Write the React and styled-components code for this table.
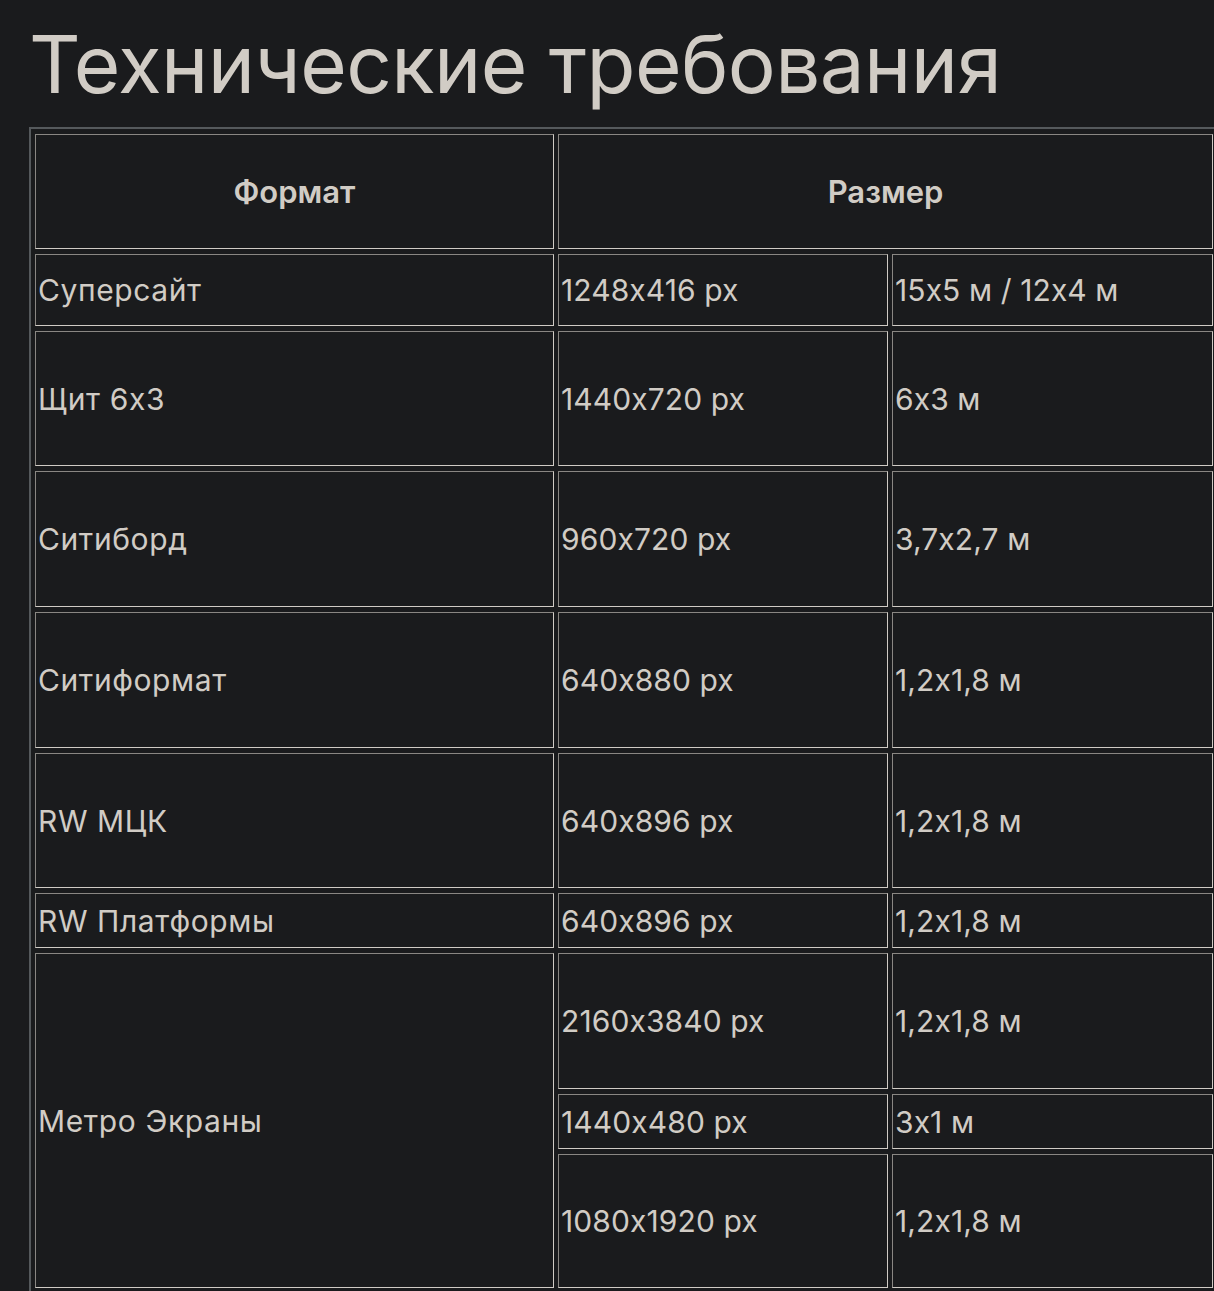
import styled, { createGlobalStyle } from 'styled-components'

const GlobalStyle = createGlobalStyle`
    html, body {
        margin: 0;
        padding: 0;
        background: #1a1b1d;
        overflow: hidden;
    }
`

const rows = [
    { format: 'Суперсайт', sizes: [['1248x416 px', '15x5 м / 12x4 м', 72]] },
    { format: 'Щит 6x3', sizes: [['1440x720 px', '6x3 м', 135]] },
    { format: 'Ситиборд', sizes: [['960x720 px', '3,7x2,7 м', 136]] },
    { format: 'Ситиформат', sizes: [['640x880 px', '1,2x1,8 м', 136]] },
    { format: 'RW МЦК', sizes: [['640x896 px', '1,2x1,8 м', 135]] },
    { format: 'RW Платформы', sizes: [['640x896 px', '1,2x1,8 м', 55]] },
    {
        format: 'Метро Экраны',
        sizes: [
            ['2160x3840 px', '1,2x1,8 м', 136],
            ['1440x480 px', '3x1 м', 55],
            ['1080x1920 px', '1,2x1,8 м', 134],
        ],
    },
]

const App = () => {
    return (
        <>
            <GlobalStyle />
            <Page>
                <Title>Технические требования</Title>
                <Table>
                    <colgroup>
                        <col style={{ width: 519 }} />
                        <col style={{ width: 330 }} />
                        <col style={{ width: 321 }} />
                    </colgroup>
                    <thead>
                        <tr>
                            <HeadCell>Формат</HeadCell>
                            <HeadCell colSpan={2}>Размер</HeadCell>
                        </tr>
                    </thead>
                    <tbody>
                        {rows.map((row) =>
                            row.sizes.map(([px, m, h], i) => (
                                <tr key={row.format + i}>
                                    {i === 0 ? (
                                        <Cell rowSpan={row.sizes.length} $h={row.sizes.length === 1 ? h : undefined} $wide>
                                            {row.format}
                                        </Cell>
                                    ) : null}
                                    <Cell $h={h}>{px}</Cell>
                                    <Cell $h={h}>{m}</Cell>
                                </tr>
                            ))
                        )}
                    </tbody>
                </Table>
            </Page>
        </>
    )
}

export default App

const Page = styled.div`
    padding: 24px 0 0 29px;
    width: 1300px;
    color: #d1ccc5;
    font-family: Inter, 'Noto Sans', sans-serif;
    font-feature-settings: 'calt' 0;
`

const Title = styled.h1`
    margin: 0 0 23px 0;
    font-size: 80px;
    line-height: 80px;
    font-weight: 400;
    letter-spacing: -0.6px;
    color: #d1ccc5;
`

const Table = styled.table`
    table-layout: fixed;
    width: 1190px;
    border-collapse: separate;
    border-spacing: 4px 5px;
    border: 2px solid #55595c;
`

const Cell = styled.td`
    box-sizing: border-box;
    height: ${(p) => (p.$h ? `${p.$h}px` : 'auto')};
    padding: 1px 2px;
    border: 1px solid;
    border-color: #8a8783 #d0cbc5 #d0cbc5 #8a8783;
    font-size: 30px;
    line-height: 36px;
    font-weight: 400;
    letter-spacing: ${(p) => (p.$wide ? '0.6px' : '0.1px')};
    text-align: left;
    vertical-align: middle;
    white-space: nowrap;
`

const HeadCell = styled.th`
    box-sizing: border-box;
    height: 115px;
    padding: 1px;
    border: 1px solid;
    border-color: #8a8783 #d0cbc5 #d0cbc5 #8a8783;
    font-size: 31px;
    line-height: 36px;
    font-weight: 600;
    text-align: center;
    vertical-align: middle;
`
